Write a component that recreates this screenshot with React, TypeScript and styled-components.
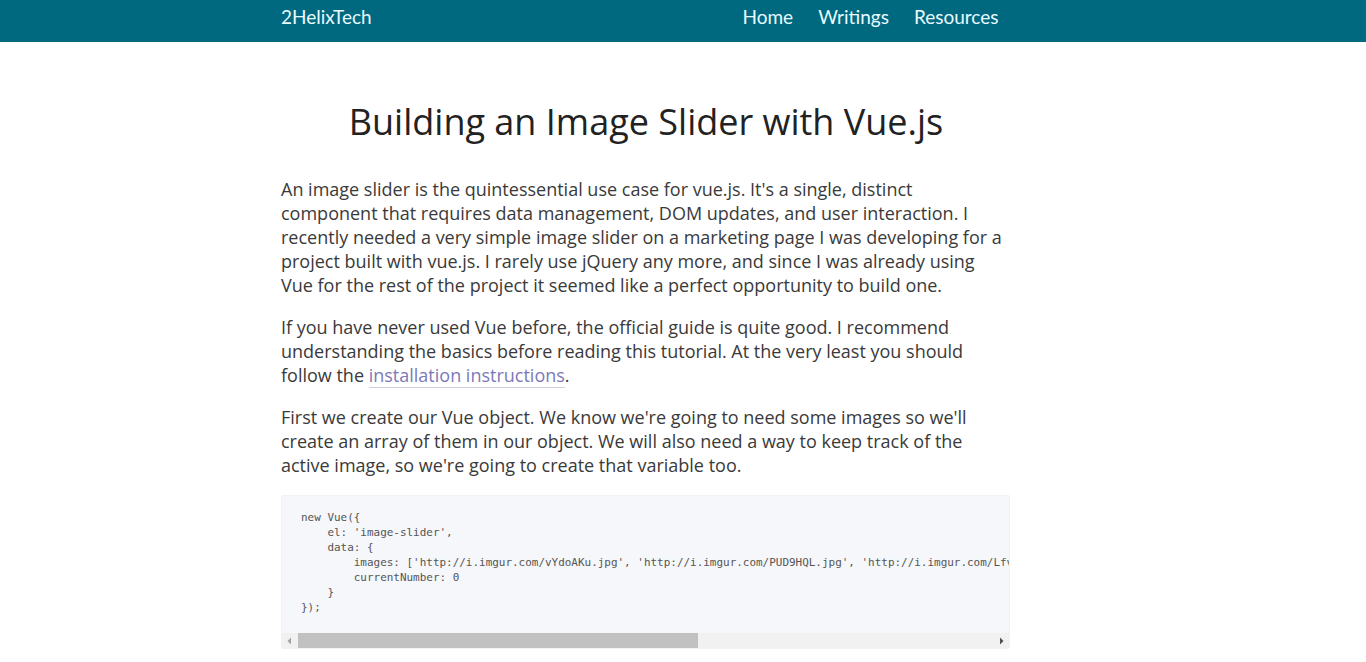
import React from "react";
import styled, { createGlobalStyle } from "styled-components";

const Global = createGlobalStyle`
  html, body { margin: 0; padding: 0; background: #fff; }
  body { font-family: "Open Sans", "Noto Sans", sans-serif; color: #333; }
  * { box-sizing: border-box; }
`;

const NavBar = styled.header`
  height: 42px;
  background: #00687f;
`;

const Container = styled.div`
  width: 730px;
  margin-left: calc(50% - 402px);
`;

const NavInner = styled(Container)`
  height: 42px;
  display: flex;
  align-items: center;
  justify-content: space-between;
  padding-bottom: 8px;
`;

const Brand = styled.a`
  font-family: "Lato", "Noto Sans", sans-serif;
  font-size: 19px;
  line-height: 24px;
  color: #e8fbff;
  text-decoration: none;
`;

const NavList = styled.nav`
  display: flex;
`;

const NavLink = styled.a`
  font-family: "Lato", "Noto Sans", sans-serif;
  font-size: 19px;
  line-height: 24px;
  color: #e8fbff;
  text-decoration: none;
  padding: 0 12.5px;
`;

const Title = styled.h1`
  margin: 58px 0 34px;
  font-size: 36px;
  font-weight: 400;
  line-height: 43px;
  text-align: center;
  color: #222;
`;

const Para = styled.p`
  margin: 0 0 18px;
  font-size: 18px;
  line-height: 24px;
  color: #3a3a3a;
`;

const Link = styled.a`
  color: #7b7ab8;
  text-decoration: none;
  border-bottom: 1px solid #cfcfe4;
`;

const CodeBlock = styled.div`
  width: 729px;
  background: #f5f7fa;
  border: 1px solid #f0f2f5;
  border-radius: 2px;
`;

const Pre = styled.pre`
  margin: 0;
  padding: 14px 19px 18px;
  overflow: hidden;
  white-space: pre;
  font-family: "DejaVu Sans Mono", "Liberation Mono", monospace;
  font-size: 10.96px;
  line-height: 15px;
  color: #555;
`;

const ScrollBar = styled.div`
  height: 15px;
  display: flex;
  align-items: stretch;
  background: #f1f1f1;
`;

const ArrowButton = styled.div`
  width: 15px;
  display: flex;
  align-items: center;
  justify-content: center;
`;

const Track = styled.div`
  flex: 1;
  padding: 0 1px;
  display: flex;
  align-items: stretch;
`;

const Thumb = styled.div`
  width: 400px;
  background: #c1c1c1;
`;

const Arrow = ({ dir, color }: { dir: "left" | "right"; color: string }) => (
  <svg width="7" height="8" viewBox="0 0 7 8">
    {dir === "left" ? (
      <polygon points="5,0.5 5,7.5 1.5,4" fill={color} />
    ) : (
      <polygon points="2,0.5 2,7.5 5.5,4" fill={color} />
    )}
  </svg>
);

const code = `new Vue({
    el: 'image-slider',
    data: {
        images: ['http://i.imgur.com/vYdoAKu.jpg', 'http://i.imgur.com/PUD9HQL.jpg', 'http://i.imgur.com/Lfv7x8N.jpg', 'http://i.imgur.com/tXvDhvE.jpg'],
        currentNumber: 0
    }
});`;

export default function App() {
  return (
    <>
      <Global />
      <NavBar>
        <NavInner>
          <Brand href="#">2HelixTech</Brand>
          <NavList>
            <NavLink href="#">Home</NavLink>
            <NavLink href="#">Writings</NavLink>
            <NavLink href="#">Resources</NavLink>
          </NavList>
        </NavInner>
      </NavBar>
      <Container>
        <Title>Building an Image Slider with Vue.js</Title>
        <Para>
          An image slider is the quintessential use case for vue.js. It's a single, distinct
          component that requires data management, DOM updates, and user interaction. I
          recently needed a very simple image slider on a marketing page I was developing for a
          project built with vue.js. I rarely use jQuery any more, and since I was already using
          Vue for the rest of the project it seemed like a perfect opportunity to build one.
        </Para>
        <Para>
          If you have never used Vue before, the official guide is quite good. I recommend
          understanding the basics before reading this tutorial. At the very least you should
          follow the <Link href="#">installation instructions</Link>.
        </Para>
        <Para>
          First we create our Vue object. We know we're going to need some images so we'll
          create an array of them in our object. We will also need a way to keep track of the
          active image, so we're going to create that variable too.
        </Para>
        <CodeBlock>
          <Pre>{code}</Pre>
          <ScrollBar>
            <ArrowButton>
              <Arrow dir="left" color="#a3a3a3" />
            </ArrowButton>
            <Track>
              <Thumb />
            </Track>
            <ArrowButton>
              <Arrow dir="right" color="#505050" />
            </ArrowButton>
          </ScrollBar>
        </CodeBlock>
      </Container>
    </>
  );
}
